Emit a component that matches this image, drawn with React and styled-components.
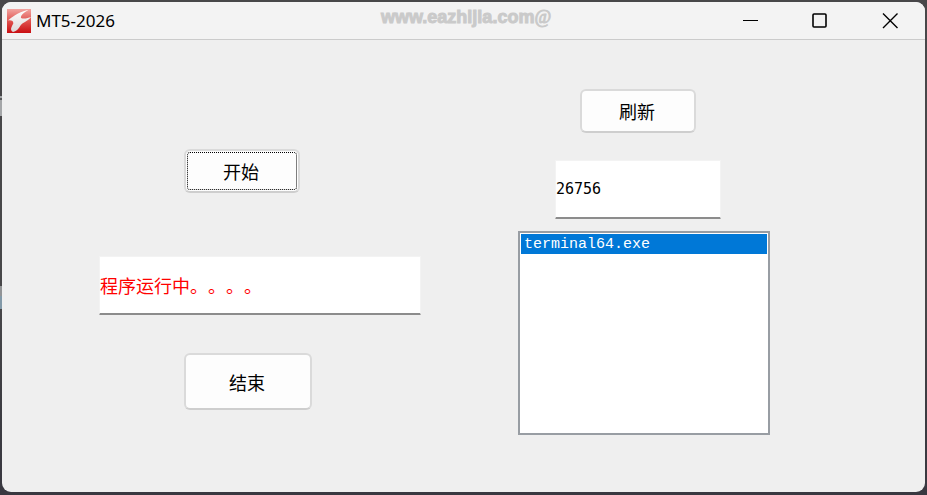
import { useState } from 'react';
import styled, { createGlobalStyle } from 'styled-components';

const GlobalStyle = createGlobalStyle`
  * {
    box-sizing: border-box;
  }

  body {
    margin: 0;
    background-color: #464547;
  }
`;

/* what shows of the desktop around the rounded window */
const Desktop = styled.div`
  display: flex;
  min-height: 100vh;
  padding: 2px 2px 3px;
  background:
    linear-gradient(
        transparent 96px,
        #a4a6a8 96px 98px,
        #58595b 98px 100px,
        #a4a6a8 100px 116px,
        transparent 116px 286px,
        #929496 286px 296px,
        #8299a8 296px 309px,
        transparent 309px
      )
      left top / 2px 100% no-repeat,
    linear-gradient(#484749 60%, #3b3b41 85%, #393840);
`;

const Window = styled.main`
  flex: 1;
  display: flex;
  flex-direction: column;
  border-radius: 9px;
  overflow: hidden;
  background-color: #efefef;
`;

const TitleBar = styled.header`
  display: grid;
  grid-template-columns: 1fr auto 1fr;
  align-items: center;
  height: 38px;
  padding-left: 5px;
  background-color: #f3f3f3;
  border-bottom: 1px solid #cbcbcb;
`;

const AppTitle = styled.h1`
  display: flex;
  align-items: center;
  gap: 5px;
  margin: 0;
  color: #000;
  font: 400 17px/24px 'Noto Sans', 'Open Sans', sans-serif;
`;

const Watermark = styled.span`
  color: #cacaca;
  font: 700 18px/24px 'Liberation Sans Narrow', 'Liberation Sans', sans-serif;
  -webkit-text-stroke: 1px #cacaca;
  padding-bottom: 8px;

  em {
    font: italic 400 18px/24px 'Liberation Serif', serif;
  }
`;

const WindowControls = styled.div`
  display: flex;
  justify-content: flex-end;
`;

const ControlBtn = styled.button`
  display: flex;
  align-items: center;
  justify-content: center;
  width: 70px;
  height: 37px;
  padding: 0;
  border: none;
  background: none;
  color: #000;

  &:hover {
    background-color: #e5e5e5;
  }
`;

const Content = styled.div`
  flex: 1;
  display: grid;
  grid-template-columns: minmax(0, 322fr) minmax(0, 252fr);
  column-gap: 97px;
  align-items: start;
  padding: 49px 155px 56px 97px;
`;

const RunPanel = styled.section`
  display: flex;
  flex-direction: column;
  padding-top: 60px;
`;

const ButtonRow = styled.div`
  padding-left: 85px;
`;

const ProcessPanel = styled.section`
  display: flex;
  flex-direction: column;
  gap: 12px;
`;

const ProcessHead = styled.div`
  display: flex;
  flex-direction: column;
  align-items: center;
  gap: 27px;
  padding-right: 12px;
`;

const PushButton = styled.button`
  width: ${(props) => (props.$large ? '128px' : '116px')};
  height: ${(props) => (props.$large ? '57px' : '44px')};
  padding: 0 2px 0 0;
  border: 2px solid #dadada;
  border-bottom-color: #cecece;
  border-radius: 6px;
  background-color: #fdfdfd;
  color: #000;
  font: 400 18px/24px 'Noto Sans CJK SC', sans-serif;
  outline: ${(props) => (props.$focused ? '1px dotted #000' : 'none')};
  outline-offset: -4px;

  &:active {
    background-color: #f0f0f0;
  }
`;

const TextField = styled.input`
  width: ${(props) => (props.$short ? '166px' : '100%')};
  height: 59px;
  padding: 0;
  border: 1px solid #f3f3f3;
  border-bottom: 2px solid #8c8c8c;
  border-radius: 1px;
  background-color: #fff;
  color: #000;
  font: 400 15px/20px 'DejaVu Sans Mono', monospace;
  outline: none;
`;

const StatusField = styled(TextField)`
  margin: 63px 0 38px;
  color: #f00;
  font: 400 18px/24px 'Noto Sans CJK SC', sans-serif;
  font-feature-settings: 'chws' 0, 'halt' 0;
  text-spacing-trim: space-all;
`;

const ProcessList = styled.select`
  width: 100%;
  height: 204px;
  padding: 1px;
  border: 2px solid #989da3;
  border-radius: 0;
  background-color: #fff;
  font: 400 15px/20px 'Liberation Mono', monospace;
  outline: none;

  option {
    height: 20px;
    min-height: 20px;
    padding: 2px 3px 0;
  }

  option:checked {
    background: #0078d7 linear-gradient(#0078d7, #0078d7);
    color: #fff;
    -webkit-text-fill-color: #fff;
  }
`;

const AppLogo = () => (
  <svg width="24" height="24" viewBox="0 0 24 24" aria-hidden="true">
    <defs>
      <linearGradient id="logoRed" x1="0" y1="0" x2="0" y2="1">
        <stop offset="0" stopColor="#f2a5a1" />
        <stop offset="0.5" stopColor="#e0524e" />
        <stop offset="1" stopColor="#c90e12" />
      </linearGradient>
      <linearGradient id="logoWing" x1="0" y1="0" x2="0" y2="1">
        <stop offset="0" stopColor="#fff" />
        <stop offset="1" stopColor="#dcd6d6" />
      </linearGradient>
    </defs>
    <rect width="24" height="24" fill="url(#logoRed)" />
    <path
      d="M0.5 11.5 C5 9 9 3.5 21.5 0.8 C16.5 4 13.5 6.5 14 9 C17 10.3 21 9 24 8 C20 13 15.5 13.5 13.5 16.5 C11.5 20 9 22.5 6 23 C2.5 21 4.5 18 6.3 14.5 C6.5 11.5 4 10.8 0.5 11.5 Z"
      fill="url(#logoWing)"
    />
  </svg>
);

const App = () => {
  const [status, setStatus] = useState('程序运行中。。。。');
  const [pid, setPid] = useState('26756');

  return (
    <Desktop>
      <GlobalStyle />
      <Window>
        <TitleBar>
          <AppTitle>
            <AppLogo />
            MT5-2026
          </AppTitle>
          <Watermark>
            www.eazhijia.com<em>@</em>
          </Watermark>
          <WindowControls>
            <ControlBtn aria-label="最小化">
              <svg width="16" height="16" viewBox="0 0 16 16">
                <path d="M1 7.5H16" stroke="currentColor" />
              </svg>
            </ControlBtn>
            <ControlBtn aria-label="最大化">
              <svg width="16" height="16" viewBox="0 0 16 16" fill="none">
                <rect
                  x="1"
                  y="1"
                  width="13"
                  height="13"
                  rx="1"
                  stroke="currentColor"
                  strokeWidth="1.6"
                />
              </svg>
            </ControlBtn>
            <ControlBtn aria-label="关闭">
              <svg width="16" height="16" viewBox="0 0 16 16">
                <path
                  d="M1 0.5L15.5 15M15.5 0.5L1 15"
                  stroke="currentColor"
                  strokeWidth="1.4"
                />
              </svg>
            </ControlBtn>
          </WindowControls>
        </TitleBar>

        <Content>
          {/* start / stop */}
          <RunPanel>
            <ButtonRow>
              <PushButton
                $focused
                onClick={() => setStatus('程序运行中。。。。')}
              >
                开始
              </PushButton>
            </ButtonRow>
            <StatusField aria-label="状态" value={status} readOnly />
            <ButtonRow>
              <PushButton $large onClick={() => setStatus('')}>
                结束
              </PushButton>
            </ButtonRow>
          </RunPanel>

          {/* process picker */}
          <ProcessPanel>
            <ProcessHead>
              <PushButton>刷新</PushButton>
              <TextField
                $short
                aria-label="PID"
                value={pid}
                onChange={(e) => setPid(e.target.value)}
              />
            </ProcessHead>
            <ProcessList size={9} aria-label="进程" defaultValue="terminal64.exe">
              <option value="terminal64.exe">terminal64.exe</option>
            </ProcessList>
          </ProcessPanel>
        </Content>
      </Window>
    </Desktop>
  );
};

export default App;
